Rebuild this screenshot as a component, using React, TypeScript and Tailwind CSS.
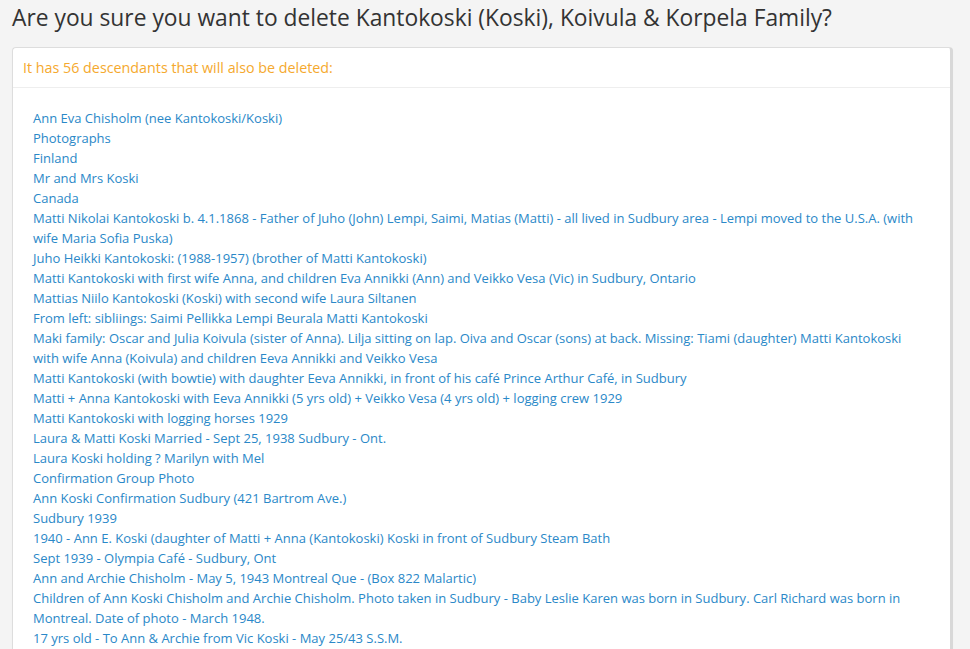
import React from "react";

const items = [
  "Ann Eva Chisholm (nee Kantokoski/Koski)",
  "Photographs",
  "Finland",
  "Mr and Mrs Koski",
  "Canada",
  "Matti Nikolai Kantokoski b. 4.1.1868 - Father of Juho (John) Lempi, Saimi, Matias (Matti) - all lived in Sudbury area - Lempi moved to the U.S.A. (with wife Maria Sofia Puska)",
  "Juho Heikki Kantokoski: (1988-1957) (brother of Matti Kantokoski)",
  "Matti Kantokoski with first wife Anna, and children Eva Annikki (Ann) and Veikko Vesa (Vic) in Sudbury, Ontario",
  "Mattias Niilo Kantokoski (Koski) with second wife Laura Siltanen",
  "From left: sibliings: Saimi Pellikka Lempi Beurala Matti Kantokoski",
  "Maki family: Oscar and Julia Koivula (sister of Anna). Lilja sitting on lap. Oiva and Oscar (sons) at back. Missing: Tiami (daughter) Matti Kantokoski with wife Anna (Koivula) and children Eeva Annikki and Veikko Vesa",
  "Matti Kantokoski (with bowtie) with daughter Eeva Annikki, in front of his café Prince Arthur Café, in Sudbury",
  "Matti + Anna Kantokoski with Eeva Annikki (5 yrs old) + Veikko Vesa (4 yrs old) + logging crew 1929",
  "Matti Kantokoski with logging horses 1929",
  "Laura & Matti Koski Married - Sept 25, 1938 Sudbury - Ont.",
  "Laura Koski holding ? Marilyn with Mel",
  "Confirmation Group Photo",
  "Ann Koski Confirmation Sudbury (421 Bartrom Ave.)",
  "Sudbury 1939",
  "1940 - Ann E. Koski (daughter of Matti + Anna (Kantokoski) Koski in front of Sudbury Steam Bath",
  "Sept 1939 - Olympia Café - Sudbury, Ont",
  "Ann and Archie Chisholm - May 5, 1943 Montreal Que - (Box 822 Malartic)",
  "Children of Ann Koski Chisholm and Archie Chisholm. Photo taken in Sudbury - Baby Leslie Karen was born in Sudbury. Carl Richard was born in Montreal. Date of photo - March 1948.",
  "17 yrs old - To Ann & Archie from Vic Koski - May 25/43 S.S.M.",
];

export default function App() {
  return (
    <div
      className="h-[649px] bg-[#f4f4f4] overflow-hidden"
      style={{ fontFamily: '"Open Sans", sans-serif' }}
    >
      <div className="pl-[12px] pr-[17px]">
        <h1 className="text-[22.8px] leading-[36px] text-[#333] h-[47px] whitespace-nowrap">
          Are you sure you want to delete Kantokoski (Koski), Koivula &amp; Korpela Family?
        </h1>
        <div className="bg-white border border-[#ddd] border-r-[3px] border-r-[#d8d8d8] rounded-[4px] shadow-[0_1px_1px_rgba(0,0,0,0.05)]">
          <div className="h-[40px] border-b border-[#eee] px-[10px] flex items-center text-[14.3px] text-[#f5a92e]">
            It has 56 descendants that will also be deleted:
          </div>
          <ul className="pl-[20px] pr-[24px] pt-[20px] pb-[40px] text-[13px] leading-[20px] text-[#2a88c8]">
            {items.map((t, i) => (
              <li key={i}>
                <a className="cursor-pointer">{t}</a>
              </li>
            ))}
          </ul>
        </div>
      </div>
    </div>
  );
}
